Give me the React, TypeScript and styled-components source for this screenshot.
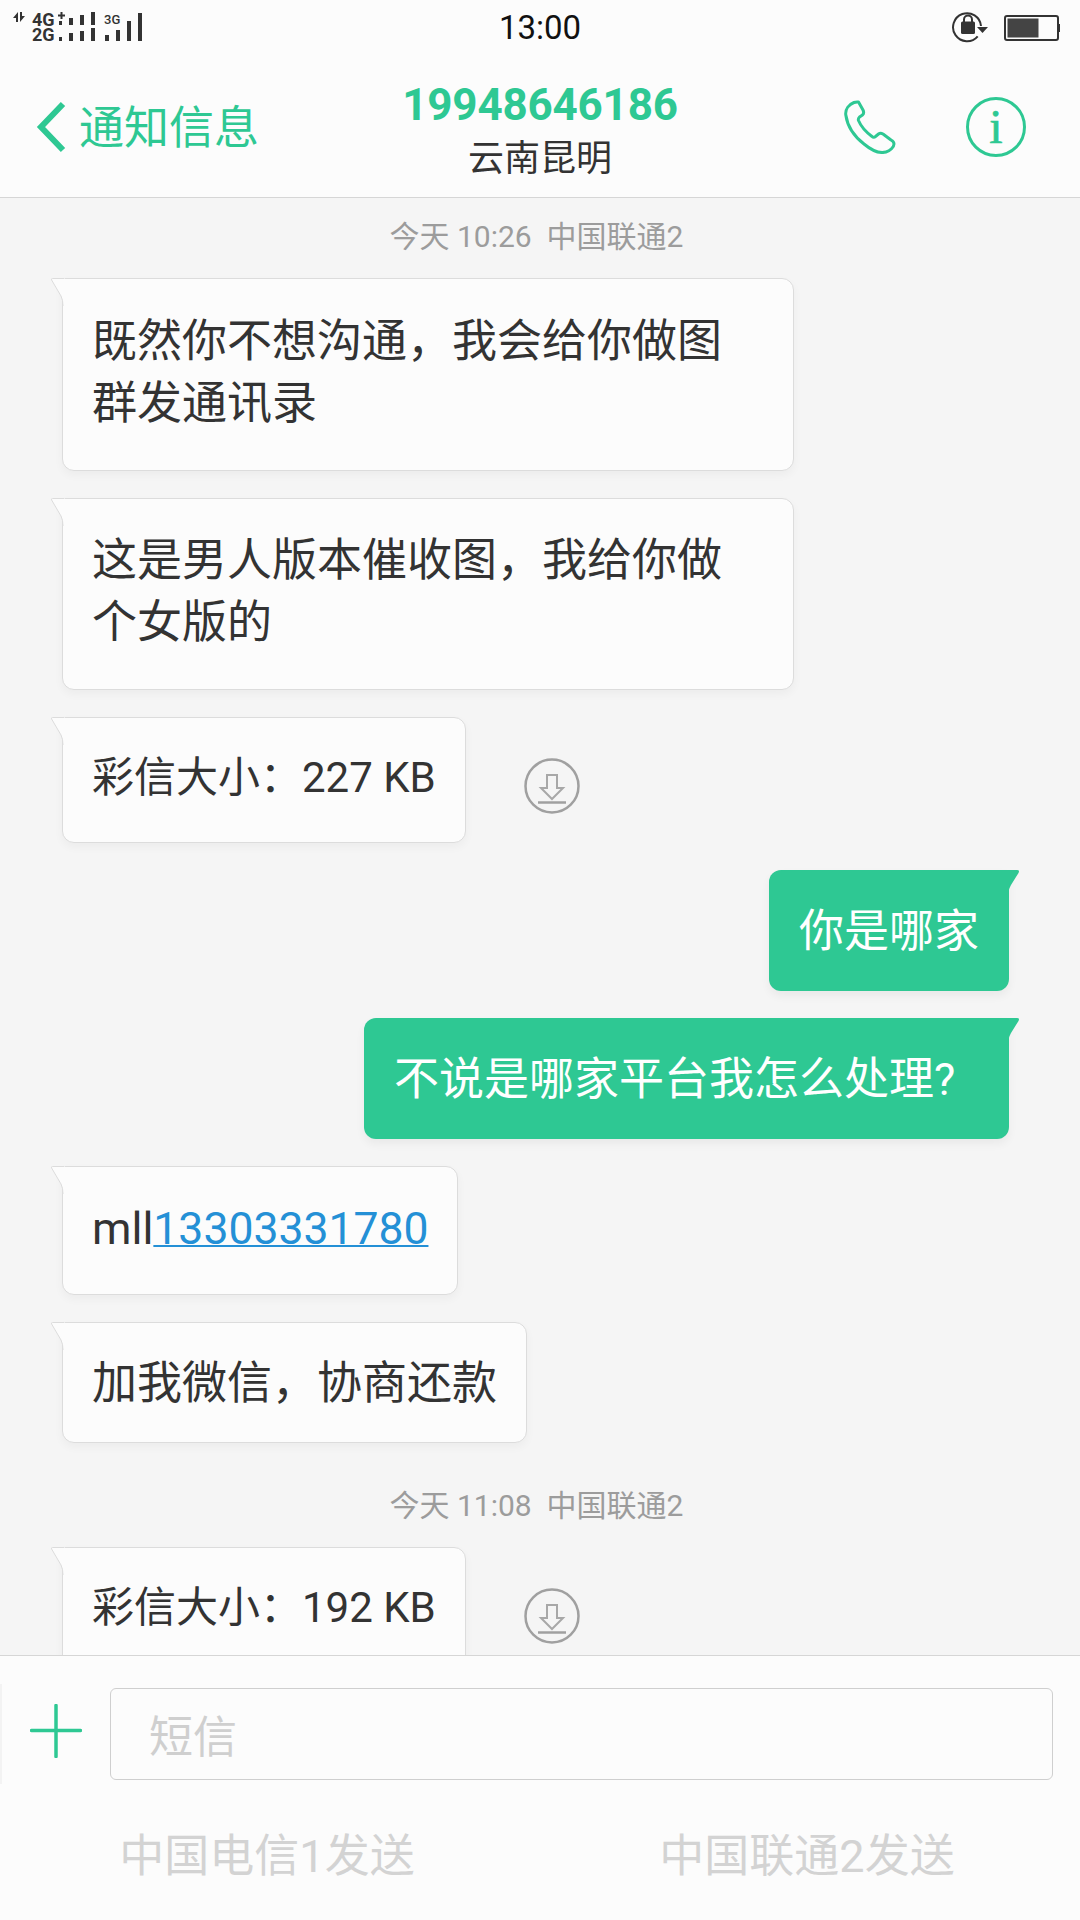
import React from "react";
import styled, { createGlobalStyle, css } from "styled-components";

const green = "#2ec893";
const fonts = `Roboto, "Noto Sans CJK SC", sans-serif`;

const Global = createGlobalStyle`
  html, body { margin: 0; padding: 0; background: #f5f5f5; }
  * { box-sizing: border-box; }
`;

const Page = styled.div`
  width: 1080px;
  height: 1920px;
  display: flex;
  flex-direction: column;
  overflow: hidden;
  background: #f5f5f5;
  font-family: ${fonts};
`;

const Top = styled.header`
  height: 198px;
  flex: none;
  background: #fcfcfc;
  border-bottom: 1px solid #d6d6d6;
  display: flex;
  flex-direction: column;
`;

const StatusBar = styled.div`
  height: 56px;
  display: grid;
  grid-template-columns: 1fr auto 1fr;
  align-items: center;
  padding: 0 12px;
`;

const Time = styled.div`
  font-size: 33px;
  color: #111;
  line-height: 56px;
`;

const StatusRight = styled.div`
  display: flex;
  justify-content: flex-end;
  align-items: center;
  gap: 16px;
  padding-right: 8px;
`;

const NavBar = styled.div`
  flex: 1;
  display: grid;
  grid-template-columns: 1fr auto 1fr;
  align-items: center;
  padding: 0 36px;
`;

const Back = styled.div`
  display: flex;
  align-items: center;
  gap: 13px;
  color: ${green};
  font-size: 45px;
`;

const BackLabel = styled.span`
  margin-top: -4px;
`;

const Center = styled.div`
  display: flex;
  flex-direction: column;
  align-items: center;
  margin-top: 6px;
`;

const Number = styled.div`
  font-size: 44px;
  font-weight: 700;
  letter-spacing: -0.2px;
  color: ${green};
  line-height: 56px;
`;

const Place = styled.div`
  font-size: 36px;
  color: #333;
  line-height: 46px;
  margin-top: 3px;
`;

const Actions = styled.div`
  display: flex;
  justify-content: flex-end;
  align-items: center;
  gap: 70px;
  padding-right: 18px;
`;

const InfoRing = styled.div`
  width: 60px;
  height: 60px;
  border: 3px solid ${green};
  border-radius: 50%;
  display: flex;
  align-items: center;
  justify-content: center;
  color: ${green};
  font-family: "Liberation Serif", serif;
  font-size: 48px;
  -webkit-text-stroke: 0.7px ${green};
  line-height: 1;
`;

const Thread = styled.main`
  flex: 1;
  min-height: 0;
  overflow: hidden;
  display: flex;
  flex-direction: column;
`;

const Stamp = styled.div<{ $top: number; $bottom: number }>`
  text-align: center;
  color: #9c9c9c;
  font-size: 30px;
  line-height: 40px;
  white-space: pre;
  padding-right: 7px;
  margin-top: ${(p) => p.$top}px;
  margin-bottom: ${(p) => p.$bottom}px;
`;

const Row = styled.div<{ $out?: boolean; $gap?: number }>`
  display: flex;
  flex: none;
  align-items: center;
  justify-content: ${(p) => (p.$out ? "flex-end" : "flex-start")};
  padding: ${(p) => (p.$out ? "0 71px 0 0" : "0 0 0 62px")};
  margin-bottom: ${(p) => p.$gap ?? 27}px;
`;

const Bubble = styled.div<{ $out?: boolean; $w: number; $h: number; $small?: boolean; $pt: number }>`
  position: relative;
  flex: none;
  width: ${(p) => p.$w}px;
  height: ${(p) => p.$h}px;
  padding: ${(p) => p.$pt}px 0 0 ${(p) => (p.$out ? 30 : 29)}px;
  font-size: ${(p) => (p.$small ? 42 : 45)}px;
  line-height: 62px;
  ${(p) =>
    p.$out
      ? css`
          border-radius: 12px 0 12px 12px;
          background: ${green};
          color: #fff;
          box-shadow: 0 5px 10px rgba(0, 0, 0, 0.05);
        `
      : css`
          border-radius: 0 12px 12px 12px;
          background: #fcfcfc;
          color: #333;
          border: 1px solid #dcdcdc;
          box-shadow: 0 4px 10px rgba(0, 0, 0, 0.04);
        `}
`;

const Tail = styled.svg<{ $out?: boolean }>`
  position: absolute;
  top: ${(p) => (p.$out ? 0 : -1)}px;
  ${(p) => (p.$out ? "right: -11px;" : "left: -12px;")}
  width: 14px;
  height: 28px;
`;

const Link = styled.span`
  color: #2490d6;
  font-size: 44.5px;
  text-decoration: underline;
  text-decoration-thickness: 2px;
`;

const Download = styled.svg`
  width: 56px;
  height: 56px;
  margin-left: 58px;
  margin-top: 12px;
`;

const Composer = styled.footer`
  height: 265px;
  flex: none;
  background: #fcfcfc;
  border-top: 1px solid #d6d6d6;
  display: flex;
  flex-direction: column;
`;

const InputRow = styled.div`
  display: grid;
  grid-template-columns: 110px 1fr;
  padding: 28px 27px 0 0;
  align-items: center;
`;

const PlusCell = styled.div`
  height: 100px;
  display: flex;
  align-items: center;
  justify-content: center;
  padding-bottom: 6px;
  border-left: 2px solid #f3f3f3;
`;

const Field = styled.div`
  height: 92px;
  border: 1px solid #cfcfcf;
  border-radius: 6px;
  padding-left: 38px;
  display: flex;
  align-items: center;
  color: #cfcfcf;
  font-size: 44px;
`;

const SendRow = styled.div`
  flex: 1;
  display: grid;
  grid-template-columns: 1fr 1fr;
  align-items: center;
`;

const Send = styled.div`
  text-align: center;
  color: #d3d3d3;
  font-size: 45px;
  padding-right: 6px;
`;

const TailIn = () => (
  <Tail viewBox="0 0 14 28">
    <path d="M13 .5H1.500Q0 .5 .6 2L10 18Q12 22 12 28H14V.5Z" fill="#fcfcfc" />
    <path d="M13 .5H1.500Q0 .5 .6 2L10 18Q12 22 12 28" fill="none" stroke="#dcdcdc" />
  </Tail>
);

const TailOut = () => (
  <Tail $out viewBox="0 0 14 28">
    <path d="M0 0H11Q14 0 12.500 3L5 15Q2 20 2 28H0Z" fill={green} />
  </Tail>
);

const labelFont = "Roboto, sans-serif";

const SignalIcon = () => (
  <svg width="134" height="44" viewBox="12 6 134 44" fill="#333">
    <path d="M18 12l-5 6h3v4h2zM20 22l5-6h-3v-4h-2z" />
    <text x="32" y="26" fontFamily={labelFont} fontSize="18" fontWeight="700">4G</text>
    <text x="32" y="41" fontFamily={labelFont} fontSize="18" fontWeight="700">2G</text>
    <path d="M60.500 12h2v2.500h2.500v2h-2.500V19h-2v-2.500H58v-2h2.500z" />
    <rect x="59" y="21" width="3" height="4" />
    <rect x="59" y="37" width="3" height="4" />
    <rect x="69" y="18" width="4" height="7" />
    <rect x="69" y="33" width="4" height="8" />
    <rect x="80" y="15" width="4" height="10" />
    <rect x="80" y="31" width="4" height="10" />
    <rect x="91" y="12" width="4" height="13" />
    <rect x="91" y="28" width="4" height="13" />
    <text x="104" y="24" fontFamily={labelFont} fontSize="13" fontWeight="500">3G</text>
    <rect x="105" y="35" width="4" height="6" />
    <rect x="116" y="30" width="4" height="11" />
    <rect x="127" y="21" width="4" height="20" />
    <rect x="138" y="13" width="4" height="28" />
  </svg>
);

const RotateLock = () => (
  <svg width="37" height="32" viewBox="0 0 37 32">
    <path d="M30 14A14 14 0 1 0 26.700 24.300" fill="none" stroke="#333" strokeWidth="2" />
    <path d="M26 15h11l-5.500 6z" fill="#333" />
    <rect x="10" y="9.500" width="14" height="12.500" rx="1.500" fill="#333" />
    <path d="M13 10V7.500a4 4 0 0 1 8 0V10" fill="none" stroke="#333" strokeWidth="2" />
  </svg>
);

const Battery = () => (
  <svg width="56" height="26" viewBox="0 0 56 26">
    <rect x="1" y="1" width="53" height="24" rx="2" fill="none" stroke="#333" strokeWidth="2" />
    <rect x="3.500" y="3.500" width="31" height="19" fill="#444" />
    <rect x="54.500" y="9" width="1.500" height="8" fill="#333" />
  </svg>
);

const Chevron = () => (
  <svg width="30" height="52" viewBox="0 0 30 52">
    <path d="M27 3L5 26l22 23" fill="none" stroke={green} strokeWidth="6" />
  </svg>
);

const PhoneIcon = () => (
  <svg width="52" height="54" viewBox="0 0 52 54">
    <path
      d="M10 2.500C5 4.500 1 9 1.800 15 3.500 27 11 37 20 44c6 5 15 10 22 8 4-1 8-5 8-8 0-2-1-3-3-4l-8-6c-2-1-3-1-4.500 0l-3 2.500c-1 1-2.500 1-3.500 0-6-4.500-11-10-13.500-16-.5-1.500 0-2.500 1-3.500l3-2c1.500-1.500 1.500-3 .5-5l-4.500-8C14 2 12 1.700 10 2.500Z"
      fill="none"
      stroke={green}
      strokeWidth="3"
      strokeLinejoin="round"
    />
  </svg>
);

const DownloadIcon = () => (
  <Download viewBox="0 0 56 56">
    <circle cx="28" cy="28" r="26.500" fill="none" stroke="#a0a0a0" strokeWidth="2.500" />
    <path d="M23 17h10v13h6L28 41 17 30h6Z" fill="none" stroke="#a8a8a8" strokeWidth="2" />
    <path d="M14 44.500h28" stroke="#a0a0a0" strokeWidth="2.500" />
  </Download>
);

const PlusIcon = () => (
  <svg width="52" height="54" viewBox="0 0 52 54">
    <path d="M1.500 26.500h49M26 1.500v51" stroke={green} strokeWidth="3.500" strokeLinecap="round" />
  </svg>
);

export default function App() {
  return (
    <Page>
      <Global />
      <Top>
        <StatusBar>
          <SignalIcon />
          <Time>13:00</Time>
          <StatusRight>
            <RotateLock />
            <Battery />
          </StatusRight>
        </StatusBar>
        <NavBar>
          <Back>
            <Chevron />
            <BackLabel>通知信息</BackLabel>
          </Back>
          <Center>
            <Number>19948646186</Number>
            <Place>云南昆明</Place>
          </Center>
          <Actions>
            <PhoneIcon />
            <InfoRing>i</InfoRing>
          </Actions>
        </NavBar>
      </Top>
      <Thread>
        <Stamp $top={19} $bottom={21}>{"今天 10:26  中国联通2"}</Stamp>
        <Row>
          <Bubble $w={732} $h={193} $pt={32}>
            <TailIn />
            既然你不想沟通，我会给你做图
            <br />
            群发通讯录
          </Bubble>
        </Row>
        <Row>
          <Bubble $w={732} $h={192} $pt={31}>
            <TailIn />
            这是男人版本催收图，我给你做
            <br />
            个女版的
          </Bubble>
        </Row>
        <Row>
          <Bubble $w={404} $h={126} $pt={29} $small>
            <TailIn />
            彩信大小：227 KB
          </Bubble>
          <DownloadIcon />
        </Row>
        <Row $out>
          <Bubble $out $w={240} $h={121} $pt={31}>
            <TailOut />
            你是哪家
          </Bubble>
        </Row>
        <Row $out>
          <Bubble $out $w={645} $h={121} $pt={31}>
            <TailOut />
            不说是哪家平台我怎么处理?
          </Bubble>
        </Row>
        <Row>
          <Bubble $w={396} $h={129} $pt={31}>
            <TailIn />
            mll<Link>13303331780</Link>
          </Bubble>
        </Row>
        <Row $gap={42}>
          <Bubble $w={465} $h={121} $pt={30}>
            <TailIn />
            加我微信，协商还款
          </Bubble>
        </Row>
        <Stamp $top={1} $bottom={21}>{"今天 11:08  中国联通2"}</Stamp>
        <Row $gap={0}>
          <Bubble $w={404} $h={126} $pt={29} $small>
            <TailIn />
            彩信大小：192 KB
          </Bubble>
          <DownloadIcon />
        </Row>
      </Thread>
      <Composer>
        <InputRow>
          <PlusCell>
            <PlusIcon />
          </PlusCell>
          <Field>短信</Field>
        </InputRow>
        <SendRow>
          <Send>中国电信1发送</Send>
          <Send>中国联通2发送</Send>
        </SendRow>
      </Composer>
    </Page>
  );
}
